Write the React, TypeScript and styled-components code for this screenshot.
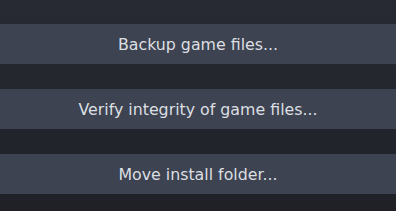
import React from "react";
import styled, { createGlobalStyle } from "styled-components";

const Global = createGlobalStyle`
  html, body { margin: 0; padding: 0; }
  body { background: #23262d; }
`;

const Page = styled.div`
  width: 396px;
  height: 211px;
  box-sizing: border-box;
  padding-top: 24px;
  display: flex;
  flex-direction: column;
  gap: 25px;
  background: linear-gradient(180deg, #272a32 0%, #23262d 50%, #1f2127 100%);
  font-family: "DejaVu Sans", "Open Sans", sans-serif;
`;

const ActionButton = styled.button`
  display: flex;
  align-items: center;
  justify-content: center;
  width: 100%;
  height: 40px;
  border: none;
  margin: 0;
  padding: 0;
  background: #3d4350;
  color: #dcdfe3;
  font-family: inherit;
  font-size: 15.8px;
  letter-spacing: 0;
  cursor: pointer;
`;

const actions = [
  "Backup game files...",
  "Verify integrity of game files...",
  "Move install folder...",
];

export default function App() {
  return (
    <>
      <Global />
      <Page>
        {actions.map((a) => (
          <ActionButton key={a}>{a}</ActionButton>
        ))}
      </Page>
    </>
  );
}
